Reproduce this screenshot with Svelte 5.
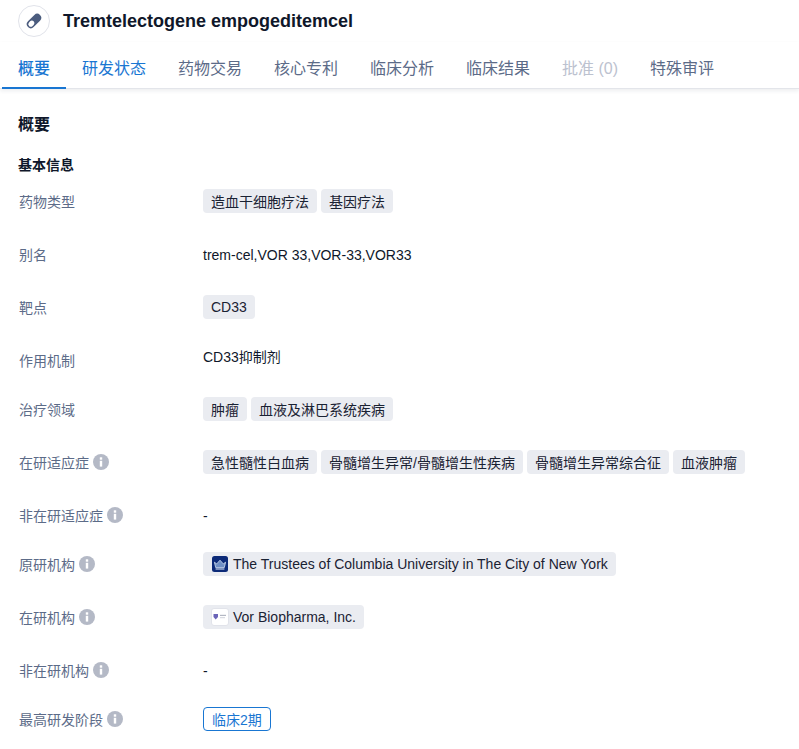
<script>
  const tabs = [
    { label: '概要', state: 'active' },
    { label: '研发状态', state: 'link' },
    { label: '药物交易' },
    { label: '核心专利' },
    { label: '临床分析' },
    { label: '临床结果' },
    { label: '批准 (0)', state: 'disabled' },
    { label: '特殊审评' }
  ];

  const rows = [
    { label: '药物类型', tags: ['造血干细胞疗法', '基因疗法'] },
    { label: '别名', text: 'trem-cel,VOR 33,VOR-33,VOR33' },
    { label: '靶点', tags: ['CD33'] },
    { label: '作用机制', text: 'CD33抑制剂', short: true, raised: true },
    { label: '治疗领域', tags: ['肿瘤', '血液及淋巴系统疾病'] },
    { label: '在研适应症', info: true, tags: ['急性髓性白血病', '骨髓增生异常/骨髓增生性疾病', '骨髓增生异常综合征', '血液肿瘤'] },
    { label: '非在研适应症', info: true, text: '-', short: true },
    { label: '原研机构', info: true, org: 'columbia', name: 'The Trustees of Columbia University in The City of New York' },
    { label: '在研机构', info: true, org: 'vor', name: 'Vor Biopharma, Inc.' },
    { label: '非在研机构', info: true, text: '-', short: true },
    { label: '最高研发阶段', info: true, phase: '临床2期' }
  ];
</script>

<div class="page">
  <header class="title-bar">
    <span class="drug-icon">
      <svg viewBox="0 0 18 18" width="18" height="18" aria-hidden="true">
        <g transform="rotate(-45 9 9)">
          <rect x="0.5" y="5" width="17" height="8" rx="4" fill="#4b5c7e" />
          <rect x="2" y="6.5" width="6.5" height="5" rx="2.5" fill="#fff" />
        </g>
      </svg>
    </span>
    <h1>Tremtelectogene empogeditemcel</h1>
  </header>

  <nav class="tabs">
    {#each tabs as tab}
      <span class="tab {tab.state ?? ''}">{tab.label}</span>
    {/each}
  </nav>

  <main class="content">
    <h2>概要</h2>
    <h3>基本信息</h3>

    {#each rows as row}
      <div class="row" class:short={row.short}>
        <div class="label">
          <span class="label-text">{row.label}</span>
          {#if row.info}
            <svg class="info" viewBox="0 0 16 16" width="16" height="16" aria-hidden="true">
              <circle cx="8" cy="8" r="8" fill="#b4b9c6" />
              <rect x="6.8" y="3.3" width="2.4" height="2.4" fill="#fff" />
              <rect x="6.8" y="6.8" width="2.4" height="5.8" fill="#fff" />
            </svg>
          {/if}
        </div>
        <div class="value">
          {#if row.tags}
            {#each row.tags as tag}
              <span class="tag">{tag}</span>
            {/each}
          {:else if row.org}
            <span class="tag org {row.org}">
              {#if row.org === 'columbia'}
                <svg class="logo" viewBox="0 0 16 16" width="16" height="16" aria-hidden="true">
                  <rect width="16" height="16" rx="2.5" fill="#0c2a78" />
                  <path d="M2.4 6.2l2.3 1.7L8 4.2l3.3 3.7 2.3-1.7-1.3 5.4H3.7z" fill="#6f8fc4" stroke="#d5e2f2" stroke-width="0.8" stroke-linejoin="round" />
                  <path d="M3.6 13h8.8" stroke="#d5e2f2" stroke-width="1.1" />
                </svg>
              {:else}
                <span class="logo-box">
                  <svg viewBox="0 0 14 8" width="14" height="8" aria-hidden="true">
                    <path d="M0.5 1h4.5v3L2.7 6.6 0.5 4z" fill="#6a64b8" />
                    <rect x="7" y="1.8" width="6" height="1.2" fill="#b4b8c4" />
                    <rect x="7" y="4.2" width="5" height="1" fill="#d0d3db" />
                  </svg>
                </span>
              {/if}
              {row.name}
            </span>
          {:else if row.phase}
            <span class="phase">{row.phase}</span>
          {:else}
            <span class="plain" class:raised={row.raised}>{row.text}</span>
          {/if}
        </div>
      </div>
    {/each}
  </main>
</div>

<style>
  :global(body) {
    background: #fff;
  }

  .page {
    height: 749px;
    overflow: hidden;
    font-family: "Liberation Sans", "Noto Sans CJK SC", sans-serif;
    color: #0f172a;
    font-size: 14px;
  }

  .title-bar {
    display: flex;
    align-items: center;
    gap: 13px;
    height: 42px;
    padding-left: 18px;
  }

  .drug-icon {
    display: flex;
    align-items: center;
    justify-content: center;
    box-sizing: border-box;
    width: 32px;
    height: 32px;
    border: 1px solid #e1e3ea;
    border-radius: 50%;
  }

  h1 {
    margin: 0;
    font-size: 18px;
    font-weight: 700;
    color: #0f172a;
  }

  .tabs {
    display: flex;
    height: 46px;
    padding-left: 2px;
    border-bottom: 1px solid #e3e5ea;
    box-shadow: 0 2px 4px rgba(30, 40, 70, 0.08);
  }

  .tab {
    box-sizing: border-box;
    height: 47px;
    padding: 0 16px;
    line-height: 53px;
    font-size: 16px;
    color: #5c6b88;
    white-space: nowrap;
  }

  .tab.active {
    color: #1976d2;
    font-weight: 500;
    border-bottom: 2px solid #1976d2;
  }

  .tab.link {
    color: #1976d2;
  }

  .tab.disabled {
    color: #bcc2cf;
  }

  .content {
    padding: 0 18px;
  }

  h2 {
    margin: 25px 0 0;
    font-size: 16px;
    line-height: 22px;
    font-weight: 700;
  }

  h3 {
    margin: 19px 0 5px;
    font-size: 14px;
    line-height: 20px;
    font-weight: 700;
  }

  .row {
    display: flex;
    align-items: flex-start;
    height: 53px;
    padding-top: 9px;
    box-sizing: border-box;
  }

  .row.short {
    height: 49px;
  }

  .label {
    display: flex;
    align-items: center;
    gap: 4px;
    width: 185px;
    flex: none;
    height: 24px;
    color: #5c6b88;
    font-size: 14px;
  }

  .label-text {
    margin-left: 1px;
  }

  .value {
    display: flex;
    gap: 4px;
    height: 24px;
    align-items: center;
    white-space: nowrap;
  }

  .tag {
    display: inline-flex;
    align-items: center;
    height: 24px;
    padding: 0 8px;
    border-radius: 4px;
    background: #eaecf1;
    font-size: 14px;
    color: #1a2233;
  }

  .org {
    gap: 5px;
  }

  .org.columbia {
    padding-left: 9px;
  }

  .org.vor {
    gap: 4px;
  }

  .logo {
    display: block;
  }

  .logo-box {
    display: flex;
    align-items: center;
    justify-content: center;
    box-sizing: border-box;
    width: 18px;
    height: 18px;
    background: #fff;
    border: 1px solid #e1e3ea;
    border-radius: 3px;
    overflow: hidden;
  }

  .logo-box svg {
    width: 14px;
    height: 8px;
    flex: none;
  }

  .phase {
    display: inline-flex;
    align-items: center;
    box-sizing: border-box;
    height: 24px;
    padding: 0 8px;
    border: 1px solid #1976d2;
    border-radius: 4px;
    color: #1976d2;
    font-size: 14px;
  }

  .plain {
    font-size: 14px;
    color: #0f172a;
    transform: translateY(1px);
  }

  .plain.raised {
    transform: translateY(-4px);
  }
</style>
